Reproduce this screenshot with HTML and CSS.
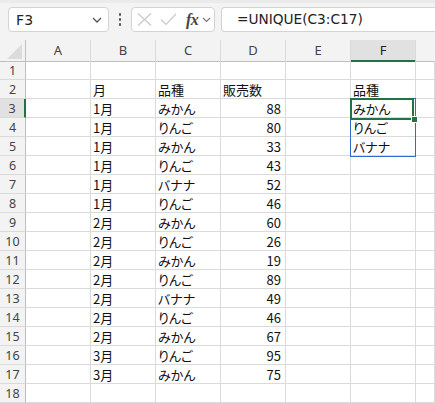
FILE: index.html
```html
<!DOCTYPE html>
<html lang="ja">
<head>
<meta charset="utf-8">
<title>UNIQUE</title>
<link rel="stylesheet" href="styles.css">
</head>
<body>
<div class="app">
  <div class="formula-bar">
    <div class="namebox">
      <span class="name">F3</span>
      <svg class="chev" width="10" height="6" viewBox="0 0 10 6"><path d="M1 1 L5 5 L9 1" fill="none" stroke="#555" stroke-width="1.3"/></svg>
    </div>
    <div class="dots"><i></i><i></i><i></i></div>
    <div class="fxbox">
      <svg class="ico" width="15" height="13" viewBox="0 0 15 13"><path d="M1 0.5 L14 12.5 M14 0.5 L1 12.5" stroke="#c9c9c9" stroke-width="1.2" fill="none"/></svg>
      <svg class="ico check" width="17" height="13" viewBox="0 0 17 13"><path d="M1 6.5 L6 11.5 L16 1" stroke="#c9c9c9" stroke-width="1.2" fill="none"/></svg>
      <span class="fx">fx</span>
      <svg class="chev2" width="9" height="6" viewBox="0 0 9 6"><path d="M1 1 L4.5 4.5 L8 1" fill="none" stroke="#777" stroke-width="1.1"/></svg>
    </div>
    <div class="formula">=UNIQUE(C3:C17)</div>
  </div>

  <div class="sheet">
    <div class="row hdr">
      <div class="corner"><span class="tri"></span></div>
      <div class="ch">A</div><div class="ch">B</div><div class="ch">C</div><div class="ch">D</div><div class="ch">E</div><div class="ch sel">F</div><div class="ch last"></div>
    </div>
    <div class="row"><div class="rh">1</div><div class="c"></div><div class="c"></div><div class="c"></div><div class="c"></div><div class="c"></div><div class="c"></div><div class="c"></div></div>
    <div class="row"><div class="rh">2</div><div class="c"></div><div class="c">月</div><div class="c">品種</div><div class="c">販売数</div><div class="c"></div><div class="c">品種</div><div class="c"></div></div>
    <div class="row"><div class="rh sel">3</div><div class="c"></div><div class="c">1月</div><div class="c">みかん</div><div class="c n">88</div><div class="c"></div><div class="c">みかん</div><div class="c"></div></div>
    <div class="row"><div class="rh">4</div><div class="c"></div><div class="c">1月</div><div class="c">りんご</div><div class="c n">80</div><div class="c"></div><div class="c">りんご</div><div class="c"></div></div>
    <div class="row"><div class="rh">5</div><div class="c"></div><div class="c">1月</div><div class="c">みかん</div><div class="c n">33</div><div class="c"></div><div class="c">バナナ</div><div class="c"></div></div>
    <div class="row"><div class="rh">6</div><div class="c"></div><div class="c">1月</div><div class="c">りんご</div><div class="c n">43</div><div class="c"></div><div class="c"></div><div class="c"></div></div>
    <div class="row"><div class="rh">7</div><div class="c"></div><div class="c">1月</div><div class="c">バナナ</div><div class="c n">52</div><div class="c"></div><div class="c"></div><div class="c"></div></div>
    <div class="row"><div class="rh">8</div><div class="c"></div><div class="c">1月</div><div class="c">りんご</div><div class="c n">46</div><div class="c"></div><div class="c"></div><div class="c"></div></div>
    <div class="row"><div class="rh">9</div><div class="c"></div><div class="c">2月</div><div class="c">みかん</div><div class="c n">60</div><div class="c"></div><div class="c"></div><div class="c"></div></div>
    <div class="row"><div class="rh">10</div><div class="c"></div><div class="c">2月</div><div class="c">りんご</div><div class="c n">26</div><div class="c"></div><div class="c"></div><div class="c"></div></div>
    <div class="row"><div class="rh">11</div><div class="c"></div><div class="c">2月</div><div class="c">みかん</div><div class="c n">19</div><div class="c"></div><div class="c"></div><div class="c"></div></div>
    <div class="row"><div class="rh">12</div><div class="c"></div><div class="c">2月</div><div class="c">りんご</div><div class="c n">89</div><div class="c"></div><div class="c"></div><div class="c"></div></div>
    <div class="row"><div class="rh">13</div><div class="c"></div><div class="c">2月</div><div class="c">バナナ</div><div class="c n">49</div><div class="c"></div><div class="c"></div><div class="c"></div></div>
    <div class="row"><div class="rh">14</div><div class="c"></div><div class="c">2月</div><div class="c">りんご</div><div class="c n">46</div><div class="c"></div><div class="c"></div><div class="c"></div></div>
    <div class="row"><div class="rh">15</div><div class="c"></div><div class="c">2月</div><div class="c">みかん</div><div class="c n">67</div><div class="c"></div><div class="c"></div><div class="c"></div></div>
    <div class="row"><div class="rh">16</div><div class="c"></div><div class="c">3月</div><div class="c">りんご</div><div class="c n">95</div><div class="c"></div><div class="c"></div><div class="c"></div></div>
    <div class="row"><div class="rh">17</div><div class="c"></div><div class="c">3月</div><div class="c">みかん</div><div class="c n">75</div><div class="c"></div><div class="c"></div><div class="c"></div></div>
    <div class="row"><div class="rh">18</div><div class="c"></div><div class="c"></div><div class="c"></div><div class="c"></div><div class="c"></div><div class="c"></div><div class="c"></div></div>

    <div class="spill"></div>
    <div class="active"></div>
    <div class="handle"></div>
  </div>
</div>
</body>
</html>
```

FILE: styles.css
```css
html, body {
  margin: 0;
  padding: 0;
  background: #ffffff;
}
.app {
  width: 435px;
  height: 403px;
  overflow: hidden;
  background: #ffffff;
}

/* formula bar */
.formula-bar {
  height: 40px;
  box-sizing: border-box;
  background: #f3f3f3;
  border-top: 3px solid #ebebeb;
  padding: 4px 0 0 8px;
  display: flex;
  align-items: flex-start;
}
.namebox {
  width: 101px;
  height: 25px;
  box-sizing: border-box;
  background: #fff;
  border: 1px solid #d3d3d3;
  border-radius: 4px;
  display: flex;
  align-items: center;
  padding: 0 6px 0 7px;
}
.name {
  flex: 1;
  font-family: "DejaVu Sans", sans-serif;
  font-size: 14px;
  color: #222;
  letter-spacing: 0.2px;
}
.chev { display: block; }
.dots {
  width: 22px;
  height: 25px;
  display: flex;
  flex-direction: column;
  align-items: center;
  justify-content: center;
  gap: 2.5px;
}
.dots i {
  display: block;
  width: 2.5px;
  height: 2.5px;
  border-radius: 50%;
  background: #555;
}
.fxbox {
  width: 84px;
  height: 25px;
  box-sizing: border-box;
  background: #fff;
  border: 1px solid #d3d3d3;
  border-radius: 4px;
  display: flex;
  align-items: center;
  padding-left: 5px;
}
.ico { display: block; }
.check { margin-left: 8px; }
.fx {
  margin-left: 9px;
  font-family: "Liberation Serif", serif;
  font-style: italic;
  font-weight: bold;
  font-size: 16px;
  color: #444;
  letter-spacing: -0.5px;
  line-height: 20px;
}
.chev2 { display: block; margin-left: 4px; }
.formula {
  flex: 1;
  margin-left: 6px;
  height: 25px;
  box-sizing: border-box;
  background: #fff;
  border: 1px solid #d3d3d3;
  border-right: none;
  border-radius: 4px 0 0 4px;
  padding-left: 15px;
  font-family: "DejaVu Sans", sans-serif;
  font-size: 13.7px;
  line-height: 23px;
  color: #222;
}

/* sheet */
.sheet {
  position: relative;
}
.row {
  display: grid;
  grid-template-columns: 26px repeat(6, 65px) 1fr;
  height: 19px;
}
.row.hdr {
  height: 21px;
  background: #f3f3f3;
}
.corner {
  position: relative;
  border-right: 1px solid #bfbfbf;
  border-bottom: 1px solid #bfbfbf;
}
.tri {
  position: absolute;
  right: 3px;
  bottom: 2px;
  width: 0;
  height: 0;
  border-left: 15px solid transparent;
  border-bottom: 15px solid #dcdcdc;
}
.ch {
  box-sizing: border-box;
  border-right: 1px solid #d9d9d9;
  border-bottom: 1px solid #bfbfbf;
  text-align: center;
  font-family: "Noto Sans", sans-serif;
  font-size: 13px;
  line-height: 20px;
  color: #444;
}
.ch.last { border-right: none; }
.ch.sel {
  background: #e1e1e1;
  border-bottom: 2px solid #217346;
  color: #222;
}
.rh {
  box-sizing: border-box;
  background: #f3f3f3;
  border-right: 1px solid #bfbfbf;
  border-bottom: 1px solid #dadada;
  text-align: center;
  font-family: "Noto Sans", sans-serif;
  font-size: 12.5px;
  line-height: 17px;
  padding-top: 1px;
  color: #444;
}
.rh.sel {
  background: #e1e1e1;
  border-right: 2px solid #217346;
}
.c {
  box-sizing: border-box;
  border-right: 1px solid #dadada;
  border-bottom: 1px solid #dadada;
  padding: 2px 2px 0 2px;
  font-family: "Noto Sans CJK JP", sans-serif;
  font-feature-settings: "palt";
  font-size: 13px;
  line-height: 16px;
  color: #111;
  white-space: nowrap;
  overflow: hidden;
}
.c.n {
  text-align: right;
  padding-right: 4px;
}

/* selection overlays */
.spill {
  position: absolute;
  left: 350px;
  top: 58px;
  width: 66px;
  height: 59px;
  box-sizing: border-box;
  border: 1px solid #2f6ccc;
}
.active {
  position: absolute;
  left: 350px;
  top: 58px;
  width: 64px;
  height: 22px;
  box-sizing: border-box;
  border: 2px solid #217346;
}
.handle {
  position: absolute;
  left: 411px;
  top: 76px;
  width: 7px;
  height: 7px;
  box-sizing: border-box;
  background: #217346;
  border: 1px solid #fff;
}
```
